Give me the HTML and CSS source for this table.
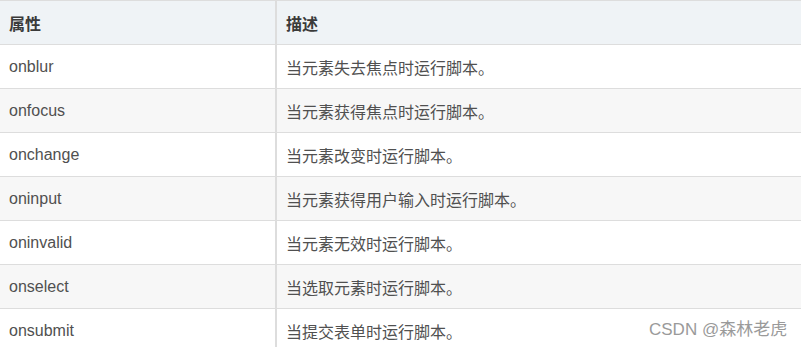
FILE: index.html
```html
<!DOCTYPE html>
<html lang="zh-CN">
<head>
<meta charset="utf-8">
<link rel="stylesheet" href="styles.css">
</head>
<body>
<div class="page">
  <table class="attr-table">
    <thead>
      <tr><th class="col-name">属性</th><th class="col-desc">描述</th></tr>
    </thead>
    <tbody>
      <tr><td>onblur</td><td>当元素失去焦点时运行脚本。</td></tr>
      <tr><td>onfocus</td><td>当元素获得焦点时运行脚本。</td></tr>
      <tr><td>onchange</td><td>当元素改变时运行脚本。</td></tr>
      <tr><td>oninput</td><td>当元素获得用户输入时运行脚本。</td></tr>
      <tr><td>oninvalid</td><td>当元素无效时运行脚本。</td></tr>
      <tr><td>onselect</td><td>当选取元素时运行脚本。</td></tr>
      <tr><td>onsubmit</td><td>当提交表单时运行脚本。</td></tr>
    </tbody>
  </table>
  <div class="watermark">CSDN @森林老虎</div>
</div>
</body>
</html>
```

FILE: styles.css
```css
html, body {
  margin: 0;
  padding: 0;
  background: #ffffff;
}
.page {
  position: relative;
  width: 801px;
  height: 347px;
  overflow: hidden;
}
.attr-table {
  width: 810px;
  margin-left: -2px;
  border-collapse: collapse;
  font-family: "Liberation Sans", "Noto Sans CJK SC", sans-serif;
  font-size: 16px;
  color: #505050;
}
.attr-table th,
.attr-table td {
  height: 44px;
  padding: 0 0 0 9px;
  text-align: left;
  vertical-align: middle;
  border: 1px solid #dddddd;
  border-left: 2px solid #dddddd;
  border-right: 2px solid #dddddd;
  box-sizing: border-box;
}
.attr-table thead tr {
  background: #eff3f6;
}
.attr-table th {
  font-weight: bold;
  color: #3a3a3a;
}
.col-name {
  width: 277px;
}
.attr-table tbody tr:nth-child(odd) {
  background: #ffffff;
}
.attr-table tbody tr:nth-child(even) {
  background: #f7f7f7;
}
.watermark {
  position: absolute;
  left: 649px;
  top: 315px;
  font-family: "Liberation Sans", "Noto Sans CJK SC", sans-serif;
  font-size: 17px;
  color: #9a9a9a;
  white-space: nowrap;
}
```
